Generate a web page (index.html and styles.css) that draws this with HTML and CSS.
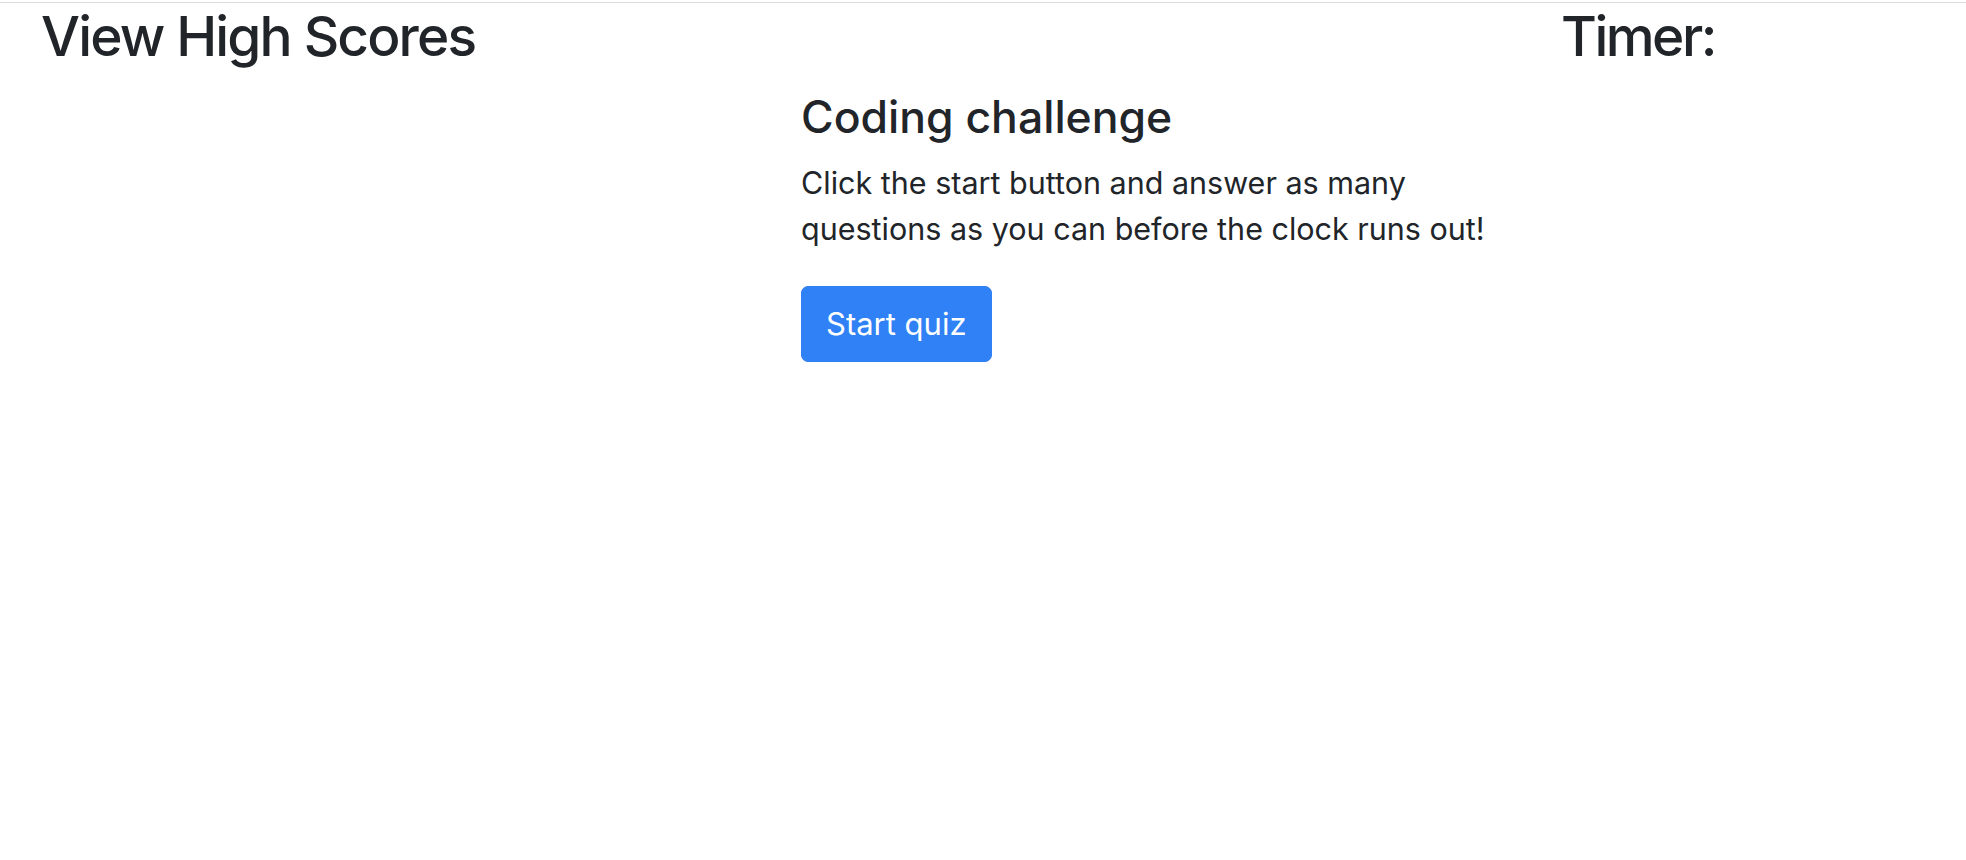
FILE: index.html
```html
<!DOCTYPE html>
<html lang="en">
<head>
<meta charset="utf-8">
<title>Coding Quiz</title>
<link rel="stylesheet" href="styles.css">
</head>
<body>
<div class="page">
  <h1 class="scores">View High Scores</h1>
  <h1 class="timer">Timer:</h1>
  <section class="intro">
    <h2 class="title">Coding challenge</h2>
    <p class="lead">Click the start button and answer as many questions as you can before the clock runs out!</p>
    <button class="btn" type="button">Start quiz</button>
  </section>
</div>
</body>
</html>
```

FILE: styles.css
```css
html, body {
  margin: 0;
  padding: 0;
  background: #fff;
}
body {
  padding-top: 2px;
  font-family: Inter, "Liberation Sans", sans-serif;
  color: #212529;
}
.page {
  border-top: 1px solid #dcdcdf;
  display: grid;
  grid-template-columns: 801px 760px 1fr;
  grid-template-rows: auto auto;
}
.scores {
  grid-column: 1;
  grid-row: 1;
  margin: 0;
  padding-left: 41px;
  font-size: 55px;
  font-weight: 500;
  line-height: 66px;
  letter-spacing: -1.85px;
  white-space: nowrap;
}
.timer {
  grid-column: 3;
  grid-row: 1;
  margin: 0;
  font-size: 55px;
  font-weight: 500;
  line-height: 66px;
  letter-spacing: -2.5px;
}
.intro {
  grid-column: 2;
  grid-row: 2;
  padding-top: 22px;
  max-width: 700px;
}
.title {
  margin: 0 0 16px;
  font-size: 44.5px;
  font-weight: 500;
  line-height: 53px;
}
.lead {
  margin: 0 0 34px;
  font-size: 30.5px;
  line-height: 46px;
}
.btn {
  font-family: inherit;
  font-size: 31px;
  line-height: 46px;
  color: #fff;
  background: #3080f6;
  border: 1px solid #3080f6;
  border-radius: 7px;
  padding: 14px 24px;
  cursor: pointer;
}
```
